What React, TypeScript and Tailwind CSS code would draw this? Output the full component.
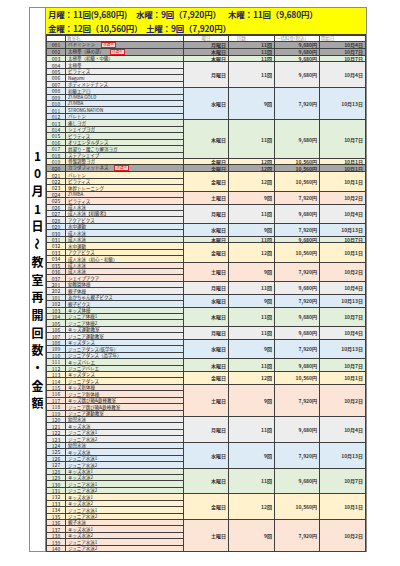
import React from 'react';

type Row = { code: string; name: string; closed?: boolean };
type Group = {
  tone: string;
  day: string;
  times: string;
  price: string;
  start: string;
  rows: Row[];
};

// 曜日ごとの回数・料金
const MON = { day: '月曜日', times: '11回', price: '9,680円', start: '10月4日' };
const WED = { day: '水曜日', times: '9回', price: '7,920円', start: '10月13日' };
const THU = { day: '木曜日', times: '11回', price: '9,680円', start: '10月7日' };
const FRI = { day: '金曜日', times: '12回', price: '10,560円', start: '10月1日' };
const SAT = { day: '土曜日', times: '9回', price: '7,920円', start: '10月2日' };

const GRAY = 'bg-[#a6a6a6]';
const MON_BG = 'bg-[#ededed]';
const WED_BG = 'bg-[#ddebf7]';
const THU_BG = 'bg-[#e2efda]';
const FRI_BG = 'bg-[#fff2cc]';
const SAT_BG = 'bg-[#fce4d6]';

const groups: Group[] = [
  { tone: GRAY, ...MON, rows: [{ code: '001', name: 'バドミントン', closed: true }] },
  { tone: GRAY, ...THU, rows: [{ code: '002', name: '太極拳（昼の部）', closed: true }] },
  { tone: THU_BG, ...THU, rows: [{ code: '003', name: '太極拳（初級・中級）' }] },
  {
    tone: MON_BG,
    ...MON,
    rows: [
      { code: '004', name: '太極拳' },
      { code: '005', name: 'ピラティス' },
      { code: '006', name: 'Nagomi' },
      { code: '007', name: 'ボディメンテナンス' },
    ],
  },
  {
    tone: WED_BG,
    ...WED,
    rows: [
      { code: '008', name: '初級エアロ' },
      { code: '009', name: 'ZUMBA GOLD' },
      { code: '010', name: 'ZUMBA' },
      { code: '011', name: 'STRONG NATION' },
      { code: '012', name: 'バレトン' },
    ],
  },
  {
    tone: THU_BG,
    ...THU,
    rows: [
      { code: '013', name: '癒しヨガ' },
      { code: '014', name: 'シェイプヨガ' },
      { code: '015', name: 'ピラティス' },
      { code: '016', name: 'オリエンタルダンス' },
      { code: '017', name: '肩凝り・腰こり解消ヨガ' },
      { code: '018', name: 'ステアシェイプ' },
    ],
  },
  { tone: FRI_BG, ...FRI, rows: [{ code: '019', name: '骨盤調整ヨガ' }] },
  { tone: GRAY, ...FRI, rows: [{ code: '020', name: 'カラダフィットネス', closed: true }] },
  {
    tone: FRI_BG,
    ...FRI,
    rows: [
      { code: '021', name: 'バレトン' },
      { code: '022', name: 'ピラティス' },
      { code: '023', name: '体幹トレーニング' },
    ],
  },
  {
    tone: SAT_BG,
    ...SAT,
    rows: [
      { code: '024', name: 'ZUMBA' },
      { code: '025', name: 'ピラティス' },
    ],
  },
  {
    tone: MON_BG,
    ...MON,
    rows: [
      { code: '026', name: '成人水泳' },
      { code: '027', name: '成人水泳【初級者】' },
      { code: '028', name: 'アクアビクス' },
    ],
  },
  {
    tone: WED_BG,
    ...WED,
    rows: [
      { code: '029', name: '水中運動' },
      { code: '030', name: '成人水泳' },
    ],
  },
  { tone: THU_BG, ...THU, rows: [{ code: '031', name: '成人水泳' }] },
  {
    tone: FRI_BG,
    ...FRI,
    rows: [
      { code: '032', name: '水中運動' },
      { code: '033', name: 'アクアビクス' },
      { code: '034', name: '成人水泳（初心・初級）' },
    ],
  },
  {
    tone: SAT_BG,
    ...SAT,
    rows: [
      { code: '035', name: '成人水泳' },
      { code: '036', name: '成人水泳' },
      { code: '037', name: 'シェイプアクア' },
    ],
  },
  {
    tone: MON_BG,
    ...MON,
    rows: [
      { code: '201', name: '幼稚園体操' },
      { code: '202', name: '親子体操' },
    ],
  },
  {
    tone: WED_BG,
    ...WED,
    rows: [
      { code: '101', name: 'あかちゃん親子ビクス' },
      { code: '102', name: '親子ビクス' },
    ],
  },
  {
    tone: THU_BG,
    ...THU,
    rows: [
      { code: '103', name: 'キッズ体操' },
      { code: '104', name: 'ジュニア体操1' },
      { code: '105', name: 'ジュニア体操2' },
    ],
  },
  {
    tone: MON_BG,
    ...MON,
    rows: [
      { code: '106', name: 'キッズ運動教室' },
      { code: '107', name: 'ジュニア運動教室' },
    ],
  },
  {
    tone: WED_BG,
    ...WED,
    rows: [
      { code: '108', name: 'キッズダンス' },
      { code: '109', name: 'ジュニアダンス(低学年)' },
      { code: '110', name: 'ジュニアダンス（高学年）' },
    ],
  },
  {
    tone: THU_BG,
    ...THU,
    rows: [
      { code: '111', name: 'キッズバレエ' },
      { code: '112', name: 'ジュニアバレエ' },
    ],
  },
  {
    tone: FRI_BG,
    ...FRI,
    rows: [
      { code: '113', name: 'キッズダンス' },
      { code: '114', name: 'ジュニアダンス' },
    ],
  },
  {
    tone: SAT_BG,
    ...SAT,
    rows: [
      { code: '115', name: 'キッズ新体操' },
      { code: '116', name: 'ジュニア新体操' },
      { code: '117', name: 'キッズ跳び箱&鉄棒教室' },
      { code: '118', name: 'ジュニア跳び箱&鉄棒教室' },
      { code: '119', name: 'ジュニア運動教室' },
    ],
  },
  {
    tone: MON_BG,
    ...MON,
    rows: [
      { code: '120', name: '幼児水泳' },
      { code: '121', name: 'キッズ水泳' },
      { code: '122', name: 'ジュニア水泳1' },
      { code: '123', name: 'ジュニア水泳2' },
    ],
  },
  {
    tone: WED_BG,
    ...WED,
    rows: [
      { code: '124', name: '幼児水泳' },
      { code: '125', name: 'キッズ水泳' },
      { code: '126', name: 'ジュニア水泳1' },
      { code: '127', name: 'ジュニア水泳2' },
    ],
  },
  {
    tone: THU_BG,
    ...THU,
    rows: [
      { code: '128', name: 'キッズ水泳1' },
      { code: '129', name: 'キッズ水泳2' },
      { code: '130', name: 'ジュニア水泳1' },
      { code: '131', name: 'ジュニア水泳2' },
    ],
  },
  {
    tone: FRI_BG,
    ...FRI,
    rows: [
      { code: '132', name: 'キッズ水泳1' },
      { code: '133', name: 'キッズ水泳2' },
      { code: '134', name: 'ジュニア水泳1' },
      { code: '135', name: 'ジュニア水泳2' },
    ],
  },
  {
    tone: SAT_BG,
    ...SAT,
    rows: [
      { code: '136', name: '親子水泳' },
      { code: '137', name: 'キッズ水泳1' },
      { code: '138', name: 'キッズ水泳2' },
      { code: '139', name: 'ジュニア水泳1' },
      { code: '140', name: 'ジュニア水泳2' },
    ],
  },
];

const sideTitle = ['1', '0', '月', '1', '日', '〜', '教', '室', '再', '開', '回', '数', '・', '金', '額'];

const cell = 'border border-[#3f3f3f] p-0 leading-none';
const valueCell = `${cell} text-right pr-[2px] text-[5px] font-semibold text-[#333]`;

const App = () => {
  return (
    <div className="w-[400px] h-[566px] bg-white pt-[7px] pl-[29px] font-['Noto_Sans_CJK_JP',sans-serif]">
      <div className="flex w-[338px] h-[545px] border border-[#8c8c8c]">
        {/* 縦書きタイトル */}
        <div className="w-[19px] flex flex-col items-center justify-center border-r border-[#8c8c8c]">
          {sideTitle.map((ch, i) => (
            <span
              key={i}
              className={`h-[17.7px] flex items-center justify-center text-[12px] font-bold text-black leading-none ${
                ch === '〜' ? 'rotate-90' : ''
              }`}
            >
              {ch}
            </span>
          ))}
        </div>

        <div className="flex-1 flex flex-col">
          {/* 曜日別料金 */}
          <div className="h-[29px] bg-[#ffff00] border-b border-[#3f3f3f] px-[2px] flex flex-col justify-center gap-[1.5px] text-[8.5px] font-bold text-[#1f2858] leading-[12px] tracking-[-0.2px] whitespace-nowrap">
            <div className="flex">
              <span className="w-[88px]">月曜：11回(9,680円)</span>
              <span className="w-[92px]">水曜：9回（7,920円）</span>
              <span>木曜：11回（9,680円）</span>
            </div>
            <div className="flex">
              <span className="w-[98px]">金曜：12回（10,560円）</span>
              <span>土曜：9回（7,920円）</span>
            </div>
          </div>

          <table className="w-[319px] table-fixed border-collapse">
            <colgroup>
              <col className="w-[19px]" />
              <col className="w-[118px]" />
              <col className="w-[45px]" />
              <col className="w-[46px]" />
              <col className="w-[45px]" />
              <col className="w-[46px]" />
            </colgroup>
            <tbody>
              <tr className="h-[6.44px] bg-white text-[4.5px] text-[#9a9a9a]">
                <td className={cell}></td>
                <td className={`${cell} pl-[1px]`}>教室名</td>
                <td className={`${cell} text-center`}>曜日</td>
                <td className={`${cell} pl-[8px]`}>回数</td>
                <td className={`${cell} pl-[1px]`}>一括料金(税込)</td>
                <td className={`${cell} pl-[1px]`}>開始日</td>
              </tr>
              {groups.map((g) =>
                g.rows.map((r, i) => (
                  <tr key={r.code} className={`h-[6.44px] ${g.tone}`}>
                    <td className={`${cell} text-center text-[5px] text-[#222]`}>{r.code}</td>
                    <td className={`${cell} pl-[2px] text-[4.5px] text-[#222] whitespace-nowrap`}>
                      {r.name}
                      {r.closed && (
                        <span className="inline-block ml-[6px] px-[1px] border-[0.5px] border-[#e02020] bg-[#f4dede] text-[#e02020] text-[3.5px] leading-[4px]">
                          休講中
                        </span>
                      )}
                    </td>
                    {i === 0 && (
                      <>
                        <td rowSpan={g.rows.length} className={valueCell}>
                          {g.day}
                        </td>
                        <td rowSpan={g.rows.length} className={valueCell}>
                          {g.times}
                        </td>
                        <td rowSpan={g.rows.length} className={valueCell}>
                          {g.price}
                        </td>
                        <td rowSpan={g.rows.length} className={valueCell}>
                          {g.start}
                        </td>
                      </>
                    )}
                  </tr>
                ))
              )}
            </tbody>
          </table>
        </div>
      </div>
    </div>
  );
};

export default App;
